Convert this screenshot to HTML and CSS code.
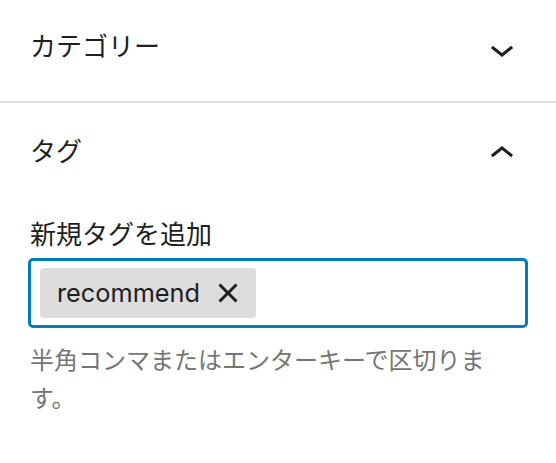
FILE: index.html
```html
<!DOCTYPE html>
<html lang="ja">
<head>
<meta charset="utf-8">
<title>タグ</title>
<link rel="stylesheet" href="styles.css">
</head>
<body>
<div class="sidebar">
  <section class="panel panel-closed">
    <div class="panel-header">
      <h2 class="panel-title">カテゴリー</h2>
      <svg class="chevron" viewBox="0 0 24 24" width="48" height="48" aria-hidden="true"><path d="M17.5 11.6L12 16l-5.5-4.4.9-1.2L12 14l4.6-3.6 1 1.2z"/></svg>
    </div>
  </section>
  <section class="panel panel-open">
    <div class="panel-header">
      <h2 class="panel-title">タグ</h2>
      <svg class="chevron" viewBox="0 0 24 24" width="48" height="48" aria-hidden="true"><path d="M6.5 12.4L12 8l5.5 4.4-.9 1.2L12 10l-4.6 3.6-1-1.2z"/></svg>
    </div>
    <div class="panel-body">
      <label class="field-label" for="tag-input">新規タグを追加</label>
      <div class="token-field">
        <span class="token">
          <span class="token-text">recommend</span>
          <button class="token-remove" type="button" aria-label="削除">
            <svg viewBox="0 0 24 24" width="48" height="48" aria-hidden="true"><path d="M12 13.06l3.712 3.713 1.061-1.06L13.061 12l3.712-3.712-1.06-1.06L12 10.938 8.288 7.227l-1.061 1.06L10.939 12l-3.712 3.712 1.06 1.061L12 13.061z"/></svg>
          </button>
        </span>
        <input id="tag-input" class="token-input" type="text">
      </div>
      <p class="help">半角コンマまたはエンターキーで区切ります。</p>
    </div>
  </section>
</div>
</body>
</html>
```

FILE: styles.css
```css
* {
  box-sizing: border-box;
}

html, body {
  margin: 0;
  padding: 0;
  background: #ffffff;
}

body {
  font-family: "Inter", "Noto Sans CJK JP", sans-serif;
  color: #1e1e1e;
}

.sidebar {
  width: 556px;
}

.panel-closed {
  height: 103px;
  border-bottom: 2px solid #e0e0e0;
}

.panel-header {
  display: flex;
  justify-content: space-between;
  align-items: flex-start;
  padding: 27px 30px 0 30px;
}

.panel-open .panel-header {
  padding-top: 29px;
}

.panel-title {
  margin: 0;
  font-size: 26px;
  font-weight: 400;
  line-height: 36px;
  font-family: "Noto Sans CJK JP", sans-serif;
}

.chevron {
  display: block;
  margin-top: -2px;
  margin-bottom: -10px;
  fill: #1e1e1e;
}

.panel-body {
  padding: 47px 28px 0 28px;
  display: flex;
  flex-direction: column;
}

.field-label {
  font-family: "Noto Sans CJK JP", sans-serif;
  font-size: 26px;
  line-height: 36px;
  padding-left: 2px;
  margin-bottom: 7px;
}

.token-field {
  display: flex;
  align-items: center;
  gap: 8px;
  height: 70px;
  border: 3px solid #007cba;
  border-radius: 5px;
  padding: 7px 9px;
}

.token {
  display: flex;
  align-items: center;
  height: 50px;
  background: #dddddd;
  border-radius: 4px;
  padding: 0 4px 0 17px;
  flex: none;
}

.token-text {
  font-size: 25.3px;
  line-height: 36px;
  color: #1e1e1e;
}

.token-remove {
  display: flex;
  align-items: center;
  justify-content: center;
  width: 48px;
  height: 48px;
  margin-left: 4px;
  padding: 0;
  border: 0;
  background: transparent;
  fill: #1e1e1e;
}

.token-remove svg {
  display: block;
}

.token-input {
  flex: 1;
  min-width: 0;
  border: 0;
  outline: none;
  background: transparent;
  font-size: 26px;
}

.help {
  margin: 12px 0 0 0;
  padding-left: 2px;
  font-family: "Noto Sans CJK JP", sans-serif;
  font-size: 24px;
  line-height: 38px;
  color: #757575;
}
```
